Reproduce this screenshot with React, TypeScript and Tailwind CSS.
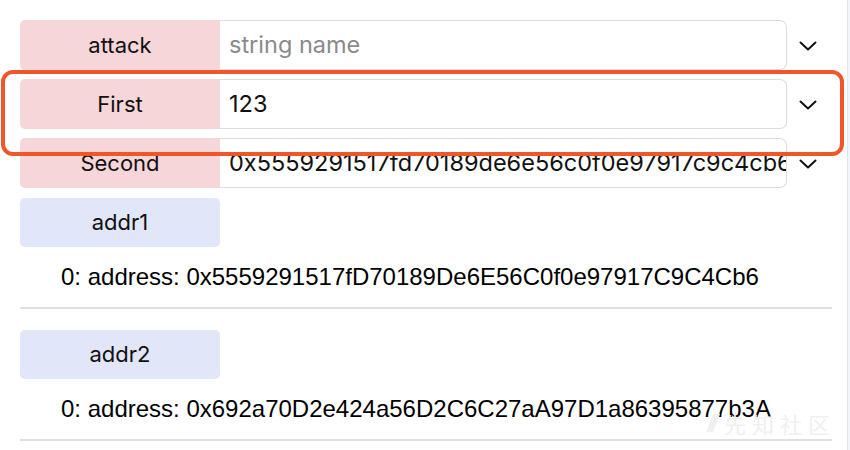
import React from "react";

type Field = { label: string; value: string; placeholder?: boolean };

const fields: Field[] = [
  { label: "attack", value: "string name", placeholder: true },
  { label: "First", value: "123" },
  { label: "Second", value: "0x5559291517fd70189de6e56c0f0e97917c9c4cb6" },
];

const outputs = [
  { name: "addr1", value: "0: address: 0x5559291517fD70189De6E56C0f0e97917C9C4Cb6" },
  { name: "addr2", value: "0: address: 0x692a70D2e424a56D2C6C27aA97D1a86395877b3A" },
];

function Chevron() {
  return (
    <svg width="18" height="10" viewBox="0 0 18 10" fill="none">
      <polyline points="1.5,1.5 9,8.5 16.5,1.5" stroke="#111" strokeWidth="2" strokeLinecap="round" strokeLinejoin="round" />
    </svg>
  );
}

export default function App() {
  return (
    <div className="relative flex h-[450px] w-[850px] overflow-hidden bg-white font-['Inter',sans-serif] text-black">
      <div className="w-[847px] pl-5 pr-[15px] pt-5">
        {/* inputs */}
        <div className="flex flex-col gap-[9px]">
          {fields.map((f) => (
            <div key={f.label} className="flex h-[50px] items-center">
              <div className="flex h-full w-[200px] items-center justify-center rounded-l-[5px] bg-[#f6d6d9] text-[22px] text-[#111]">
                {f.label}
              </div>
              <div className="flex h-full w-[567px] items-center overflow-hidden whitespace-nowrap rounded-r-[7px] border-[1.5px] border-l-0 border-[#dcdcdc] pl-[9px] pr-[4px]">
                <span className={`text-[23.5px] ${f.placeholder ? "text-[#8a8a8a]" : "text-[#111]"}`}>{f.value}</span>
              </div>
              <div className="ml-[12px] mt-[1px]">
                <Chevron />
              </div>
            </div>
          ))}
        </div>

        {/* outputs */}
        <div className="mt-[10px]">
          {outputs.map((o) => (
            <div key={o.name} className="mb-[21px]">
              <div className="flex h-[49px] w-[200px] items-center justify-center rounded-[5px] bg-[#e1e6f8] text-[22px] text-[#111]">
                {o.name}
              </div>
              <div className="mt-[16px] mb-[16px] h-[28px] pl-[41px] font-['Liberation_Sans',Arial,sans-serif] text-[24px] leading-[28px]">
                {o.value}
              </div>
              <div className="h-[2px] w-[812px] bg-[#e0e0e0]" />
            </div>
          ))}
        </div>
      </div>
      <div className="h-full w-[3px] border-l border-[#e4e7f2] bg-[#f3f5fc]" />

      {/* annotation box */}
      <div className="absolute left-[1px] top-[70px] h-[86px] w-[843px] rounded-[12px] border-[4px] border-[#ef572a]" />

      {/* watermark */}
      <div className="pointer-events-none absolute left-[706px] top-[412px] flex items-center gap-[4px] whitespace-nowrap">
        <svg width="14" height="20" viewBox="0 0 14 20">
          <polygon points="7,1 14,1 7,19 0,19" fill="#f0f0f0" />
        </svg>
        <span className="font-['Noto_Sans_CJK_SC',sans-serif] text-[22px] leading-none tracking-[6px] text-[#f0f0f0]">先知社区</span>
      </div>
    </div>
  );
}
